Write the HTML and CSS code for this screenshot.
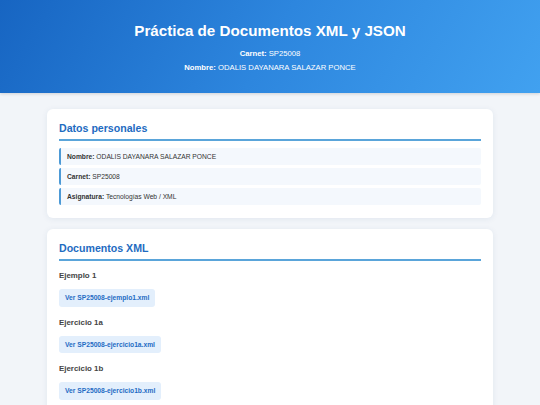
FILE: index.html
```html
<!DOCTYPE html>
<html lang="es">
<head>
<meta charset="utf-8">
<title>Práctica de Documentos XML y JSON</title>
<link rel="stylesheet" href="styles.css">
</head>
<body>
<header class="hero">
  <h1 class="hero-title">Práctica de Documentos XML y JSON</h1>
  <p class="hero-line"><strong>Carnet:</strong> SP25008</p>
  <p class="hero-line"><strong>Nombre:</strong> ODALIS DAYANARA SALAZAR PONCE</p>
</header>
<main class="container">
  <section class="card">
    <h2 class="card-title">Datos personales</h2>
    <ul class="info-list">
      <li class="info-item"><strong>Nombre:</strong> ODALIS DAYANARA SALAZAR PONCE</li>
      <li class="info-item"><strong>Carnet:</strong> SP25008</li>
      <li class="info-item"><strong>Asignatura:</strong> Tecnologías Web / XML</li>
    </ul>
  </section>
  <section class="card">
    <h2 class="card-title">Documentos XML</h2>
    <div class="doc">
      <h3 class="doc-title">Ejemplo 1</h3>
      <a class="doc-link" href="#">Ver SP25008-ejemplo1.xml</a>
    </div>
    <div class="doc">
      <h3 class="doc-title">Ejercicio 1a</h3>
      <a class="doc-link" href="#">Ver SP25008-ejercicio1a.xml</a>
    </div>
    <div class="doc">
      <h3 class="doc-title">Ejercicio 1b</h3>
      <a class="doc-link" href="#">Ver SP25008-ejercicio1b.xml</a>
    </div>
  </section>
</main>
</body>
</html>
```

FILE: styles.css
```css
* { box-sizing: border-box; }
html, body { margin: 0; padding: 0; }
body {
  background: #f2f5f9;
  font-family: "Liberation Sans", Arial, sans-serif;
  color: #333;
}
.hero {
  height: 93px;
  background: linear-gradient(120deg, #1765c2 0%, #2d86de 50%, #41a1f0 100%);
  color: #fff;
  text-align: center;
  padding-top: 22px;
  box-shadow: 0 1px 3px rgba(0,0,0,0.15);
}
.hero-title {
  margin: 0 0 7px;
  font-size: 15.2px;
  line-height: 18px;
  font-weight: bold;
}
.hero-line {
  margin: 0;
  font-size: 7.7px;
  line-height: 14px;
}
.container {
  width: 446px;
  margin: 16px auto 0;
  display: flex;
  flex-direction: column;
  gap: 11px;
}
.card {
  background: #fff;
  border-radius: 6px;
  padding: 13px 12px 13px 12px;
  box-shadow: 0 1px 6px rgba(30, 60, 110, 0.08);
}
.card-title {
  margin: 0;
  font-size: 10.6px;
  line-height: 12px;
  color: #1e6bc1;
  padding-bottom: 5px;
  border-bottom: 2px solid #5aa5da;
}
.info-list {
  list-style: none;
  margin: 7px 0 0;
  padding: 0;
  display: flex;
  flex-direction: column;
  gap: 3px;
}
.info-item {
  background: #f4f8fd;
  border-left: 2px solid #4d9ad6;
  border-radius: 2px;
  padding: 0 6px;
  font-size: 6.7px;
  line-height: 17px;
  color: #333;
}
.doc {
  margin-top: 11px;
  display: flex;
  flex-direction: column;
  align-items: flex-start;
}
.card-title + .doc { margin-top: 10px; }
.doc-title {
  margin: 0 0 8px;
  font-size: 7.9px;
  line-height: 10px;
  color: #444;
}
.doc-link {
  display: block;
  background: #e3effc;
  color: #1f6cc4;
  text-decoration: none;
  font-weight: bold;
  font-size: 6.7px;
  line-height: 17.5px;
  padding: 0 6px;
  border-radius: 3px;
}
```
